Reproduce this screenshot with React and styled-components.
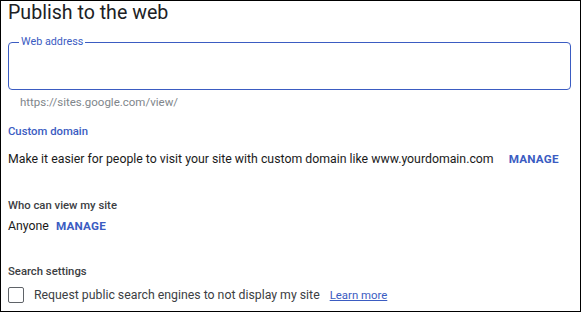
import React from 'react';
import styled, { createGlobalStyle } from 'styled-components';

const GlobalStyle = createGlobalStyle`
  html, body {
    margin: 0;
    padding: 0;
    background: #ffffff;
  }
  body {
    font-family: Roboto, "Liberation Sans", Arial, sans-serif;
    color: #202124;
  }
`;

const BLUE = '#3b5cc2';

const Panel = styled.div`
  box-sizing: border-box;
  width: 581px;
  height: 312px;
  border: 1px solid #000;
  padding: 0 9px 0 7px;
  display: flex;
  flex-direction: column;
`;

const Title = styled.h1`
  margin: 0;
  font-size: 19.6px;
  font-weight: 400;
  line-height: 24px;
  color: #202124;
`;

const Field = styled.div`
  position: relative;
  margin-top: 17px;
  height: 48px;
  box-sizing: border-box;
  border: 1px solid ${BLUE};
  border-radius: 4px;
`;

const FieldLabel = styled.span`
  position: absolute;
  top: -7px;
  left: 10px;
  padding: 0 2px;
  background: #fff;
  font-size: 10.8px;
  line-height: 12px;
  color: ${BLUE};
`;

const Helper = styled.div`
  margin: 4px 0 0 12px;
  font-size: 11.5px;
  line-height: 16px;
  color: #80868b;
`;

const SectionTitle = styled.div`
  margin-top: ${p => p.$gap}px;
  font-size: 11.3px;
  font-weight: 500;
  line-height: 16px;
  color: ${p => (p.$accent ? BLUE : '#3c4043')};
`;

const Row = styled.div`
  display: flex;
  align-items: center;
  gap: ${p => p.$gap}px;
  margin-top: ${p => p.$top}px;
  font-size: 12.3px;
  line-height: 18px;
  color: #1a1a1a;
  white-space: nowrap;
`;

const Action = styled.span`
  font-size: 11.7px;
  font-weight: 700;
  letter-spacing: 0.2px;
  color: ${BLUE};
`;

const Checkbox = styled.span`
  box-sizing: border-box;
  width: 16px;
  height: 16px;
  border: 1.5px solid #5f6368;
  border-radius: 2px;
  flex: none;
`;

const CheckText = styled.span`
  color: #3c4043;
`;

const LearnMore = styled.a`
  font-size: 11.4px;
  color: ${BLUE};
  text-decoration: underline;
`;

export default function App() {
  return (
    <>
      <GlobalStyle />
      <Panel>
        <Title>Publish to the web</Title>
        <Field>
          <FieldLabel>Web address</FieldLabel>
        </Field>
        <Helper>https://sites.google.com/view/</Helper>

        <SectionTitle $accent $gap={14}>Custom domain</SectionTitle>
        <Row $gap={15} $top={10}>
          <span>Make it easier for people to visit your site with custom domain like www.yourdomain.com</span>
          <Action>MANAGE</Action>
        </Row>

        <SectionTitle $gap={30}>Who can view my site</SectionTitle>
        <Row $gap={7} $top={3}>
          <span>Anyone</span>
          <Action>MANAGE</Action>
        </Row>

        <SectionTitle $gap={29}>Search settings</SectionTitle>
        <Row $gap={10} $top={6}>
          <Checkbox />
          <CheckText>Request public search engines to not display my site</CheckText>
          <LearnMore>Learn more</LearnMore>
        </Row>
      </Panel>
    </>
  );
}
